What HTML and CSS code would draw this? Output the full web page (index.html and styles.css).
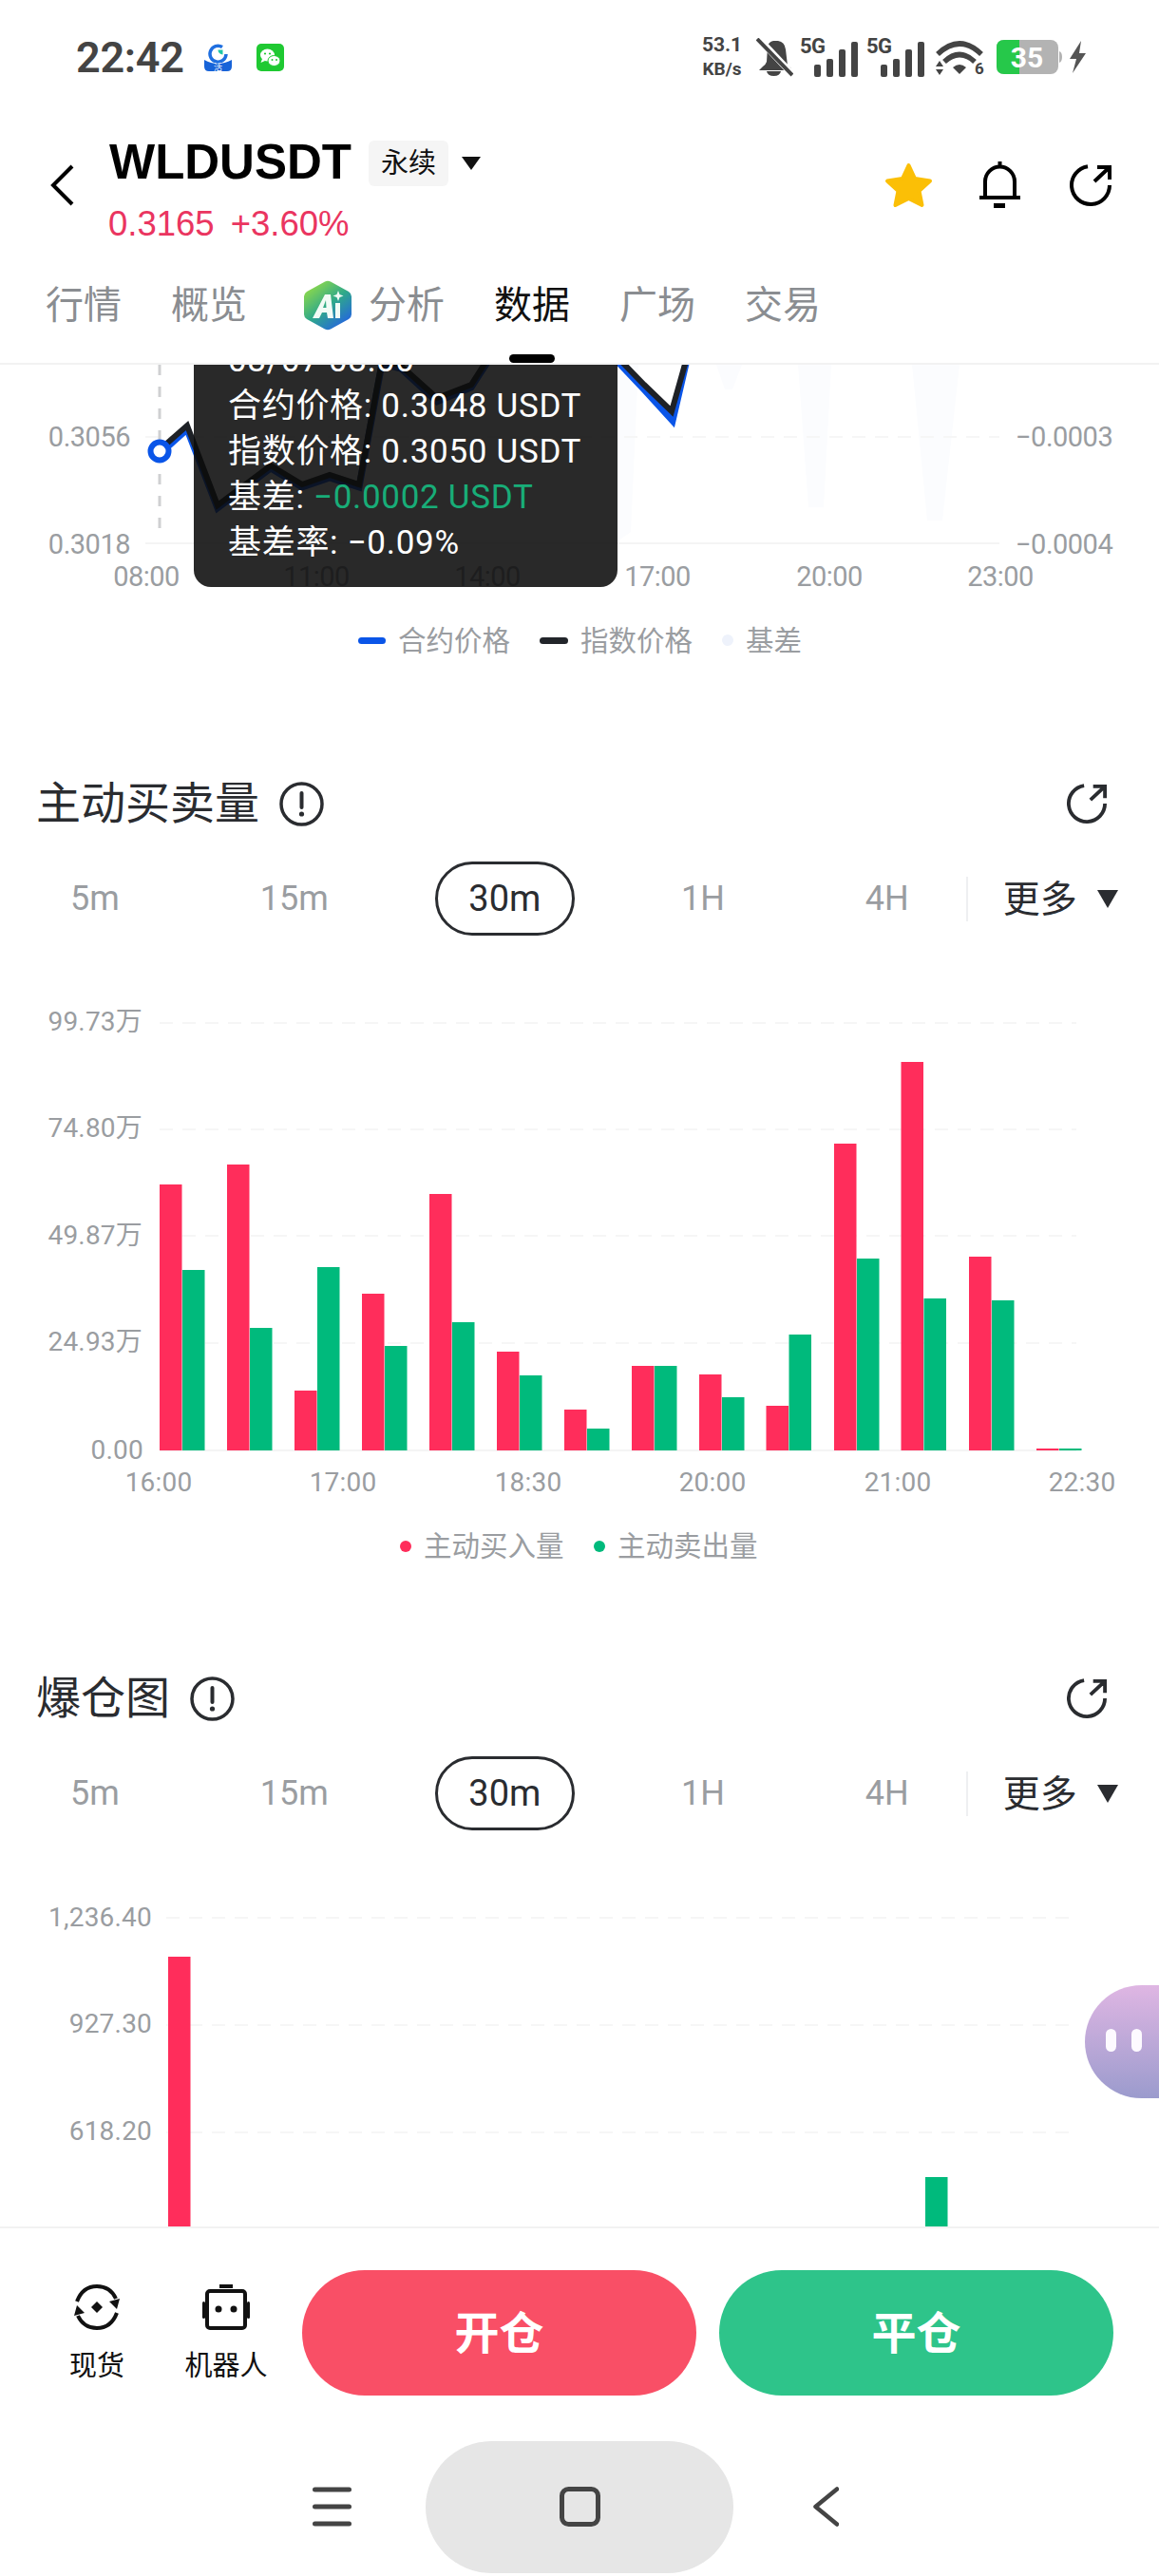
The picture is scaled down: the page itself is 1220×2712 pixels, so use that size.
FILE: index.html
```html
<!DOCTYPE html>
<html lang="zh-CN">
<head>
  <meta charset="UTF-8" />
  <meta name="viewport" content="width=device-width, initial-scale=1.0"/>
  <title>WLDUSDT 数据</title>
  <link rel="stylesheet" href="styles.css">
</head>
<body>
  <!-- shared icons -->
  <svg class="sprite">
    <symbol id="i-share" viewBox="0 0 44 44">
      <path d="M19 2.2A20 20 0 1 0 42 22M26 18 42 3M29 3H42V16" fill="none" stroke="currentColor" stroke-width="4"/>
    </symbol>
    <symbol id="i-info" viewBox="0 0 47 47">
      <circle cx="23.5" cy="23.5" r="21.5" fill="none" stroke="currentColor" stroke-width="3.5"/>
      <path d="M23.5 12V27" stroke="currentColor" stroke-width="4" stroke-linecap="round"/>
      <circle cx="23.5" cy="34" r="2.6" fill="currentColor"/>
    </symbol>
    <symbol id="i-bars" viewBox="0 0 61 41">
      <rect x="15" y="28" width="7" height="13" rx="2"/>
      <rect x="28" y="22" width="7" height="19" rx="2"/>
      <rect x="41" y="12" width="7" height="29" rx="2"/>
      <rect x="54" y="4" width="7" height="37" rx="2"/>
    </symbol>
  </svg>

  <div class="phone">
    <header class="top">
      <div class="status">
        <span class="time">22:42</span>
        <svg class="st-app" width="29" height="29" viewBox="0 0 29 29">
          <path d="M19 3.5A8.5 8.5 0 1 0 23 11" fill="none" stroke="#1f6fe0" stroke-width="3.5"/>
          <path d="M14.500 6.500h5v5a5 5 0 0 1-5-5z" fill="#1fc7a6"/>
          <path d="M0 17q14 8 29 0v7q0 5-5 5H5q-5 0-5-5z" fill="#1763d8"/>
          <text class="st-app-text" x="14.500" y="28">活</text>
        </svg>
        <svg class="st-app st-wechat" width="29" height="29" viewBox="0 0 29 29">
          <rect width="29" height="29" rx="5" fill="#1fc932"/>
          <ellipse cx="11.500" cy="12" rx="7.500" ry="6.500" fill="#fff"/>
          <path d="M6 16l-1.500 4 4.500-2z" fill="#fff"/>
          <ellipse cx="18.500" cy="18" rx="6.500" ry="5.500" fill="#fff" stroke="#1fc932"/>
          <circle cx="9" cy="10.500" r="1.100" fill="#1fc932"/>
          <circle cx="14" cy="10.500" r="1.100" fill="#1fc932"/>
          <circle cx="16.500" cy="17" r="1" fill="#1fc932"/>
          <circle cx="21" cy="17" r="1" fill="#1fc932"/>
        </svg>
        <div class="st-right">
          <div class="speed"><span>53.1</span><span class="speed-unit">KB/s</span></div>
          <svg class="st-mute" width="39" height="41" viewBox="0 0 39 41">
            <path d="M18 3h5q7 1 8 9l2 17 4 3v2H3l4-4q3-2 4-5L12 9q1-5 6-6z" fill="#444"/>
            <path d="M11 35h15q-1 5-7.500 5T11 35z" fill="#444"/>
            <path d="M2 0 38 38" stroke="#fff" stroke-width="7"/>
            <path d="M1 1 38 39" stroke="#444" stroke-width="4"/>
          </svg>
          <svg class="st-signal" width="61" height="41">
            <use href="#i-bars"/>
            <text class="sig-text" x="0" y="16">5G</text>
          </svg>
          <svg class="st-signal" width="61" height="41">
            <use href="#i-bars"/>
            <text class="sig-text" x="0" y="16">5G</text>
          </svg>
          <svg class="st-wifi" width="51" height="37" viewBox="0 0 51 37">
            <path d="M2 15Q25-7 48 15M9 23Q25 8 41 23" fill="none" stroke="#444" stroke-width="5.500"/>
            <path d="M18 29q7-6 14 0l-7 7z" fill="#444"/>
            <path d="M0 28l4-6 4 6zM0 31h8l-4 6z" fill="#444"/>
            <text class="wifi-num" x="41" y="36">6</text>
          </svg>
          <svg class="st-batt" width="69" height="36" viewBox="0 0 69 36">
            <rect x="0" width="65" height="36" rx="8" fill="#b3b3b3"/>
            <path d="M8 0h16v36H8q-8 0-8-8V8q0-8 8-8z" fill="#26c84a"/>
            <path d="M66 12q3 1 3 6t-3 6z" fill="#b3b3b3"/>
            <text class="batt-num" x="32" y="29">35</text>
          </svg>
          <svg class="st-bolt" width="17" height="34" viewBox="0 0 17 34">
            <path d="M12 0 0 19h7L3 34 17 13h-7z" fill="#555"/>
          </svg>
        </div>
      </div>

      <div class="title-row">
        <svg class="back" width="25" height="44" viewBox="0 0 25 44">
          <path d="M23 2 3 22l20 20" fill="none" stroke="#000" stroke-width="4"/>
        </svg>
        <div class="symbol">
          <div class="symbol-line">
            <span class="symbol-name">WLDUSDT</span>
            <span class="symbol-kind">永续</span>
            <span class="tri tri-head"></span>
          </div>
          <div class="symbol-price"><span>0.3165</span><span>+3.60%</span></div>
        </div>
        <div class="actions">
          <svg class="act-star" width="51" height="48" viewBox="0 0 51 48">
            <path d="M25.500 3 32 17l16 2.500-11.500 10.500 3 15-14-7-14 7 3-15L3 19.500 19 17z" fill="#fbbf06" stroke="#fbbf06" stroke-width="4" stroke-linejoin="round"/>
          </svg>
          <svg class="act-bell" width="43" height="50" viewBox="0 0 43 50">
            <path d="M21.500 0V6M6 38V21a15.500 15.500 0 0 1 31 0V38M0 38H43" fill="none" stroke="#000" stroke-width="4"/>
            <rect x="15" y="44" width="12" height="5" fill="#000"/>
          </svg>
          <svg class="act-share" width="44" height="44"><use href="#i-share"/></svg>
        </div>
      </div>

      <nav class="tabs">
        <a class="tab">行情</a>
        <a class="tab">概览</a>
        <a class="tab tab-ai">
          <svg class="ai-mark" width="50" height="53" viewBox="0 0 50 53">
            <defs>
              <linearGradient id="aiFill" x1="0.150" y1="0.100" x2="0.800" y2="0.950">
                <stop offset="0" stop-color="#8bd84c"/>
                <stop offset="0.500" stop-color="#2fa98a"/>
                <stop offset="1" stop-color="#2466de"/>
              </linearGradient>
            </defs>
            <path d="M22 1.500q3-1.500 6 0l19 10.500q3 2 3 5v19q0 3-3 5L28 51.500q-3 1.500-6 0L3 41q-3-2-3-5V17q0-3 3-5z" fill="url(#aiFill)"/>
            <path d="M9 40 22 15h6l3 25h-6l-1-6h-5l-3 6zM20 29h3.500L23 21z" fill="#f1fbf6" fill-rule="evenodd"/>
            <rect x="33" y="24" width="5" height="16" fill="#f1fbf6"/>
            <path d="M36 11l1.500 4 4 1.500-4 1.500-1.500 4-1.500-4-4-1.500 4-1.500z" fill="#f1fbf6"/>
          </svg>
          <span>分析</span>
        </a>
        <a class="tab tab-on">数据</a>
        <a class="tab">广场</a>
        <a class="tab">交易</a>
      </nav>
    </header>

    <main class="scroller">
      <!-- price / index / basis chart, scrolled so its top is under the header -->
      <section class="basis">
        <svg class="chart" width="1220" height="416" viewBox="0 384 1220 416">
          <path class="basis-area" d="M650 384h22l-8 176-14 10zM754 384h27l-10 26h-8zM840 384h35l-8 150h-16zM960 384h50l-18 164h-16z"/>
          <path class="grid" d="M153 460H1052"/>
          <path class="grid-solid" d="M153 572H1052"/>
          <path class="cursor" d="M168 384V568"/>
          <polyline class="line-blue" points="168,478 197,452 229,535 285,493 318,513 347,503 378,513 402,383 422,388 460,423 496,408 512,383 530,340 640,370 678,410 708,443 722,383 730,340"/>
          <polyline class="line-black" points="172,470 197,448 229,532 285,490 318,510 347,500 378,510 402,380 422,385 460,419 496,405 512,380 530,340 640,366 678,405 707,433 722,380 730,340"/>
          <circle class="marker" cx="168" cy="475" r="9.500"/>
          <text class="axis" x="137" y="470" text-anchor="end">0.3056</text>
          <text class="axis" x="137" y="583" text-anchor="end">0.3018</text>
          <text class="axis" x="1069" y="470">−0.0003</text>
          <text class="axis" x="1069" y="583">−0.0004</text>
          <text class="axis" x="154" y="617" text-anchor="middle">08:00</text>
          <text class="axis" x="333" y="617" text-anchor="middle">11:00</text>
          <text class="axis" x="513" y="617" text-anchor="middle">14:00</text>
          <text class="axis" x="692" y="617" text-anchor="middle">17:00</text>
          <text class="axis" x="873" y="617" text-anchor="middle">20:00</text>
          <text class="axis" x="1053" y="617" text-anchor="middle">23:00</text>
          <rect class="key-blue" x="377" y="671" width="29" height="7" rx="3.500"/>
          <text class="legend" x="419" y="685">合约价格</text>
          <rect class="key-black" x="568" y="671" width="30" height="7" rx="3.500"/>
          <text class="legend" x="611" y="685">指数价格</text>
          <circle class="key-basis" cx="766" cy="674" r="6"/>
          <text class="legend" x="785" y="685">基差</text>
        </svg>
        <div class="tip">
          <div>08/07 08:00</div>
          <div>合约价格: 0.3048 USDT</div>
          <div>指数价格: 0.3050 USDT</div>
          <div>基差: <span class="tip-down">−0.0002 USDT</span></div>
          <div>基差率: −0.09%</div>
        </div>
      </section>

      <section class="panel">
        <div class="panel-head">
          <h2>主动买卖量</h2>
          <svg class="info" width="47" height="47"><use href="#i-info"/></svg>
          <svg class="panel-share" width="42" height="42"><use href="#i-share"/></svg>
        </div>
        <div class="periods">
          <span class="period">5m</span>
          <span class="period">15m</span>
          <span class="period period-on">30m</span>
          <span class="period">1H</span>
          <span class="period">4H</span>
          <span class="sep"></span>
          <span class="more">更多</span>
          <span class="tri tri-more"></span>
        </div>
        <svg class="chart" width="1220" height="757" viewBox="0 985 1220 757">
          <path class="grid" d="M168 1077H1133M168 1189H1133M168 1301H1133M168 1414H1133"/>
          <path class="grid-solid" d="M168 1527H1133"/>
          <g class="bars-buy">
            <rect x="168" y="1247" width="23.500" height="280"/>
            <rect x="239" y="1226" width="23.500" height="301"/>
            <rect x="310" y="1464" width="23.500" height="63"/>
            <rect x="381" y="1362" width="23.500" height="165"/>
            <rect x="452" y="1257" width="23.500" height="270"/>
            <rect x="523" y="1423" width="23.500" height="104"/>
            <rect x="594" y="1484" width="23.500" height="43"/>
            <rect x="665" y="1438" width="23.500" height="89"/>
            <rect x="736" y="1447" width="23.500" height="80"/>
            <rect x="806.500" y="1480" width="23.500" height="47"/>
            <rect x="878" y="1204" width="23.500" height="323"/>
            <rect x="948.500" y="1118" width="23.500" height="409"/>
            <rect x="1020" y="1323" width="23.500" height="204"/>
            <rect x="1091" y="1525" width="23.500" height="2"/>
          </g>
          <g class="bars-sell">
            <rect x="192" y="1337" width="23.500" height="190"/>
            <rect x="263" y="1398" width="23.500" height="129"/>
            <rect x="334" y="1334" width="23.500" height="193"/>
            <rect x="405" y="1417" width="23.500" height="110"/>
            <rect x="476" y="1392" width="23.500" height="135"/>
            <rect x="547" y="1448" width="23.500" height="79"/>
            <rect x="618" y="1504" width="23.500" height="23"/>
            <rect x="689" y="1438" width="23.500" height="89"/>
            <rect x="760" y="1471" width="23.500" height="56"/>
            <rect x="830.500" y="1405" width="23.500" height="122"/>
            <rect x="902" y="1325" width="23.500" height="202"/>
            <rect x="972.500" y="1367" width="23.500" height="160"/>
            <rect x="1044" y="1369" width="23.500" height="158"/>
            <rect x="1115" y="1525" width="23.500" height="2"/>
          </g>
          <text class="axis axis-sm" x="150" y="1085" text-anchor="end">99.73万</text>
          <text class="axis axis-sm" x="150" y="1197" text-anchor="end">74.80万</text>
          <text class="axis axis-sm" x="150" y="1310" text-anchor="end">49.87万</text>
          <text class="axis axis-sm" x="150" y="1422" text-anchor="end">24.93万</text>
          <text class="axis axis-sm" x="151" y="1536" text-anchor="end">0.00</text>
          <text class="axis axis-sm" x="167" y="1570" text-anchor="middle">16:00</text>
          <text class="axis axis-sm" x="361" y="1570" text-anchor="middle">17:00</text>
          <text class="axis axis-sm" x="556" y="1570" text-anchor="middle">18:30</text>
          <text class="axis axis-sm" x="750" y="1570" text-anchor="middle">20:00</text>
          <text class="axis axis-sm" x="945" y="1570" text-anchor="middle">21:00</text>
          <text class="axis axis-sm" x="1139" y="1570" text-anchor="middle">22:30</text>
          <circle class="key-buy" cx="427" cy="1628" r="6"/>
          <text class="legend" x="446" y="1638">主动买入量</text>
          <circle class="key-sell" cx="631" cy="1628" r="6"/>
          <text class="legend" x="650" y="1638">主动卖出量</text>
        </svg>
      </section>

      <section class="panel">
        <div class="panel-head">
          <h2>爆仓图</h2>
          <svg class="info" width="47" height="47"><use href="#i-info"/></svg>
          <svg class="panel-share" width="42" height="42"><use href="#i-share"/></svg>
        </div>
        <div class="periods">
          <span class="period">5m</span>
          <span class="period">15m</span>
          <span class="period period-on">30m</span>
          <span class="period">1H</span>
          <span class="period">4H</span>
          <span class="sep"></span>
          <span class="more">更多</span>
          <span class="tri tri-more"></span>
        </div>
        <svg class="chart" width="1220" height="420" viewBox="0 1927 1220 420">
          <path class="grid" d="M175 2019H1130M175 2132H1130M175 2245H1130"/>
          <g class="bars-buy"><rect x="177" y="2060" width="23.500" height="300"/></g>
          <g class="bars-sell"><rect x="974" y="2292" width="23.500" height="70"/></g>
          <text class="axis axis-sm" x="160" y="2028" text-anchor="end">1,236.40</text>
          <text class="axis axis-sm" x="160" y="2140" text-anchor="end">927.30</text>
          <text class="axis axis-sm" x="160" y="2253" text-anchor="end">618.20</text>
        </svg>
      </section>
    </main>

    <footer class="bottom">
      <div class="toolbar">
        <a class="tool tool-spot">
          <svg width="50" height="50" viewBox="0 0 50 50">
            <path d="M4 19Q10 3 25 3q14 0 20 13M46 31Q40 47 25 47 11 47 5 34" fill="none" stroke="#111" stroke-width="4"/>
            <path d="M38 19l11-3-3 11zM12 31 1 34l3-11z" fill="#111"/>
            <path d="M25 19l6 6-6 6-6-6z" fill="#111"/>
          </svg>
          <span>现货</span>
        </a>
        <a class="tool tool-bot">
          <svg width="50" height="50" viewBox="0 0 50 50">
            <rect x="18" y="1" width="14" height="4" fill="#111"/>
            <rect x="5" y="8" width="40" height="39" rx="3" fill="none" stroke="#111" stroke-width="4"/>
            <rect x="0" y="19" width="3" height="18" rx="1.500" fill="#111"/>
            <rect x="47" y="19" width="3" height="18" rx="1.500" fill="#111"/>
            <circle cx="17" cy="27" r="3.500" fill="#111"/>
            <circle cx="33" cy="27" r="3.500" fill="#111"/>
          </svg>
          <span>机器人</span>
        </a>
        <button class="trade trade-open">开仓</button>
        <button class="trade trade-close">平仓</button>
      </div>
      <div class="sysnav">
        <svg class="nav-menu" width="41" height="42" viewBox="0 0 41 42">
          <path d="M2.500 3H38.500M2.500 21H38.500M2.500 39H38.500" stroke="#444" stroke-width="5" stroke-linecap="round"/>
        </svg>
        <div class="nav-home">
          <svg width="43" height="42" viewBox="0 0 43 42">
            <rect x="2.500" y="2.500" width="38" height="37" rx="7" fill="none" stroke="#444" stroke-width="5"/>
          </svg>
        </div>
        <svg class="nav-back" width="27" height="42" viewBox="0 0 27 42">
          <path d="M25 2.500 2.500 21 25 39.500" fill="none" stroke="#444" stroke-width="4.500" stroke-linecap="round" stroke-linejoin="round"/>
        </svg>
      </div>
    </footer>

    <!-- floating assistant handle -->
    <div class="bubble"><i></i><i></i></div>
  </div>
</body>
</html>
```

FILE: styles.css
```css
* {
  box-sizing: border-box;
}
body {
  margin: 0;
  background: #fff;
  font-family: Roboto, 'Noto Sans CJK SC', sans-serif;
  color: #2a2c30;
}
.sprite {
  position: absolute;
  width: 0;
  height: 0;
}
.phone {
  position: relative;
  width: 1220px;
  height: 2712px;
  display: flex;
  flex-direction: column;
  overflow: hidden;
  background: #fff;
}

/* status bar */
.status {
  height: 120px;
  padding: 0 77px 0 80px;
  display: flex;
  align-items: center;
}
.time {
  font-size: 45px;
  font-weight: 600;
  color: #444;
  width: 135px;
  letter-spacing: -0.3px;
}
.st-wechat {
  margin-left: 26px;
}
.st-right {
  margin-left: auto;
  display: flex;
  align-items: center;
  fill: #444;
}
.speed {
  width: 50px;
  display: flex;
  flex-direction: column;
  align-items: center;
  font-size: 21px;
  font-weight: 700;
  line-height: 25px;
  color: #444;
}
.speed-unit {
  font-size: 19px;
}
.st-mute {
  margin-left: 11px;
}
.st-signal {
  margin-left: 7px;
}
.st-signal + .st-signal {
  margin-left: 9px;
}
.st-wifi {
  margin-left: 12px;
}
.st-batt {
  margin-left: 13px;
}
.st-bolt {
  margin-left: 8px;
}
.sig-text {
  font-size: 22px;
  font-weight: 700;
  letter-spacing: -0.5px;
}
.st-app-text {
  font-size: 9px;
  fill: #fff;
  text-anchor: middle;
}
.wifi-num {
  font-size: 17px;
  font-weight: 700;
  fill: #444;
}
.batt-num {
  font-size: 30px;
  font-weight: 700;
  fill: #fff;
  text-anchor: middle;
}

/* symbol row */
.title-row {
  height: 150px;
  padding: 0 50px 0 53px;
  display: flex;
  align-items: center;
}
.symbol {
  margin-left: 37px;
  align-self: flex-start;
  padding-top: 28px;
}
.symbol-line {
  display: flex;
  align-items: center;
  height: 48px;
}
.symbol-name {
  font-family: 'Liberation Sans', sans-serif;
  font-size: 51px;
  font-weight: 700;
  color: #000;
  margin-top: -4px;
}
.symbol-kind {
  margin-left: 18px;
  width: 84px;
  height: 48px;
  background: #f5f5f5;
  border-radius: 6px;
  font-size: 29px;
  line-height: 48px;
  text-align: center;
  color: #111;
}
.symbol-price {
  margin: 22px 0 0 -1px;
  display: flex;
  gap: 17px;
  font-family: 'Liberation Sans', sans-serif;
  font-size: 36.500px;
  line-height: 36px;
  color: #ea3560;
}
.tri {
  width: 0;
  height: 0;
  border-style: solid;
  border-color: #111 transparent transparent;
}
.tri-head {
  margin-left: 14px;
  border-width: 14px 10.5px 0;
}
.actions {
  margin-left: auto;
  display: flex;
  align-items: center;
}
.act-bell {
  margin-left: 49px;
}
.act-share {
  margin-left: 52px;
  color: #000;
}

/* tabs */
.tabs {
  height: 114px;
  padding: 27px 0 0 48px;
  display: flex;
  gap: 52px;
  border-bottom: 2px solid #f2f2f2;
}
.tab {
  position: relative;
  height: 85px;
  display: flex;
  align-items: flex-start;
  font-size: 40px;
  line-height: 50px;
  color: #8a8d91;
}
.tab-ai {
  margin-left: 8px;
}
.ai-mark {
  margin: -2px 18px 0 0;
}
.tab-on {
  color: #111;
}
.tab-on::after {
  content: "";
  position: absolute;
  left: 16px;
  bottom: 0;
  width: 48px;
  height: 9px;
  border-radius: 5px;
  background: #000;
}

/* scrolling charts */
.scroller {
  height: 1960px;
  overflow: hidden;
}
.chart {
  display: block;
}
.basis {
  position: relative;
  height: 416px;
}
.tip {
  position: absolute;
  left: 204px;
  top: -44px;
  width: 446px;
  padding: 16px 0 22px 36px;
  border-radius: 0 0 18px 18px;
  background: rgba(11, 11, 11, 0.88);
  color: #fff;
  font-size: 35px;
  line-height: 48px;
  letter-spacing: 0.7px;
  white-space: nowrap;
}
.tip-down {
  color: #18ad78;
}
.axis {
  font-size: 29px;
  fill: #9a9da1;
  letter-spacing: -0.5px;
}
.axis-sm {
  font-size: 28px;
  letter-spacing: 0.2px;
}
.legend {
  font-size: 29.500px;
  fill: #9a9da1;
}
.grid {
  fill: none;
  stroke: #f6f6f6;
  stroke-width: 2;
  stroke-dasharray: 14 10;
}
.grid-solid {
  fill: none;
  stroke: #f4f4f4;
  stroke-width: 2;
}
.cursor {
  fill: none;
  stroke: #cfd0d2;
  stroke-width: 3;
  stroke-dasharray: 11 12;
}
.basis-area {
  fill: #fbfcfe;
}
.line-blue {
  fill: none;
  stroke: #0a55e8;
  stroke-width: 7;
}
.line-black {
  fill: none;
  stroke: #1e2126;
  stroke-width: 6;
}
.marker {
  fill: #fff;
  stroke: #0a55e8;
  stroke-width: 6;
}
.key-blue {
  fill: #0a55e8;
}
.key-black {
  fill: #22252a;
}
.key-basis {
  fill: #eef2fb;
}
.key-buy,
.bars-buy {
  fill: #ff2d5b;
}
.key-sell,
.bars-sell {
  fill: #00ba7c;
}

/* chart panels */
.panel {
  height: 942px;
}
.panel-head {
  height: 92px;
  padding: 0 55px 0 38px;
  display: flex;
  align-items: center;
}
.panel-head h2 {
  margin: 0;
  font-size: 47px;
  font-weight: 400;
  line-height: 60px;
  color: #2a2c30;
}
.info {
  margin-left: 21px;
  color: #2a2c30;
}
.panel-share {
  margin-left: auto;
  color: #2a2c30;
}
.periods {
  margin-top: 15px;
  height: 78px;
  padding-left: 38px;
  display: flex;
  align-items: center;
}
.period {
  padding: 0 36px;
  margin-right: 76px;
  font-size: 36px;
  line-height: 80px;
  color: #9a9da1;
}
.period:nth-child(5) {
  margin-right: 0;
}
.period-on {
  height: 78px;
  line-height: 72px;
  border: 3.500px solid #2a2c30;
  border-radius: 39px;
  padding: 0 32.500px;
  font-size: 38px;
  color: #2a2c30;
}
.sep {
  margin-left: 24px;
  width: 2px;
  height: 47px;
  background: #eeeff1;
}
.more {
  margin: 2px 0 0 37px;
  font-size: 39px;
  line-height: 50px;
  color: #2a2c30;
}
.tri-more {
  margin-left: 21px;
  border-width: 19px 11.500px 0;
  border-top-color: #2a2c30;
}

/* bottom bar */
.bottom {
  flex: 1;
  border-top: 2px solid #f2f2f2;
}
.toolbar {
  height: 214px;
  padding: 44px 0 0 60px;
  display: flex;
  align-items: flex-start;
}
.tool {
  margin-top: 14px;
  display: flex;
  flex-direction: column;
  align-items: center;
  gap: 17px;
  font-size: 29px;
  line-height: 40px;
  color: #111;
}
.tool svg {
  display: block;
}
.tool-spot {
  width: 84px;
}
.tool-bot {
  width: 100px;
  margin-left: 44px;
}
.trade {
  width: 415px;
  height: 132px;
  padding: 0 0 8px;
  border: none;
  border-radius: 66px;
  color: #fff;
  font-family: inherit;
  font-size: 47px;
  font-weight: 700;
}
.trade-open {
  margin-left: 30px;
  background: #f94f66;
}
.trade-close {
  margin-left: 24px;
  background: #2ec48a;
}
.sysnav {
  height: 152px;
  padding: 6px 0 0 329px;
  display: flex;
  align-items: center;
}
.nav-home {
  margin-left: 78px;
  width: 324px;
  height: 139px;
  border-radius: 70px;
  background: #e6e6e6;
  display: flex;
  align-items: center;
  justify-content: center;
}
.nav-back {
  margin-left: 84px;
}

/* floating handle over the charts */
.bubble {
  position: absolute;
  right: 0;
  top: 2090px;
  width: 78px;
  height: 119px;
  padding: 46px 0 0 22px;
  display: flex;
  gap: 16px;
  border-radius: 60px 0 0 60px;
  background: linear-gradient(#dfb6e3, #9b9bcd);
}
.bubble i {
  width: 11px;
  height: 24px;
  border-radius: 6px;
  background: #fdfaff;
}
```
